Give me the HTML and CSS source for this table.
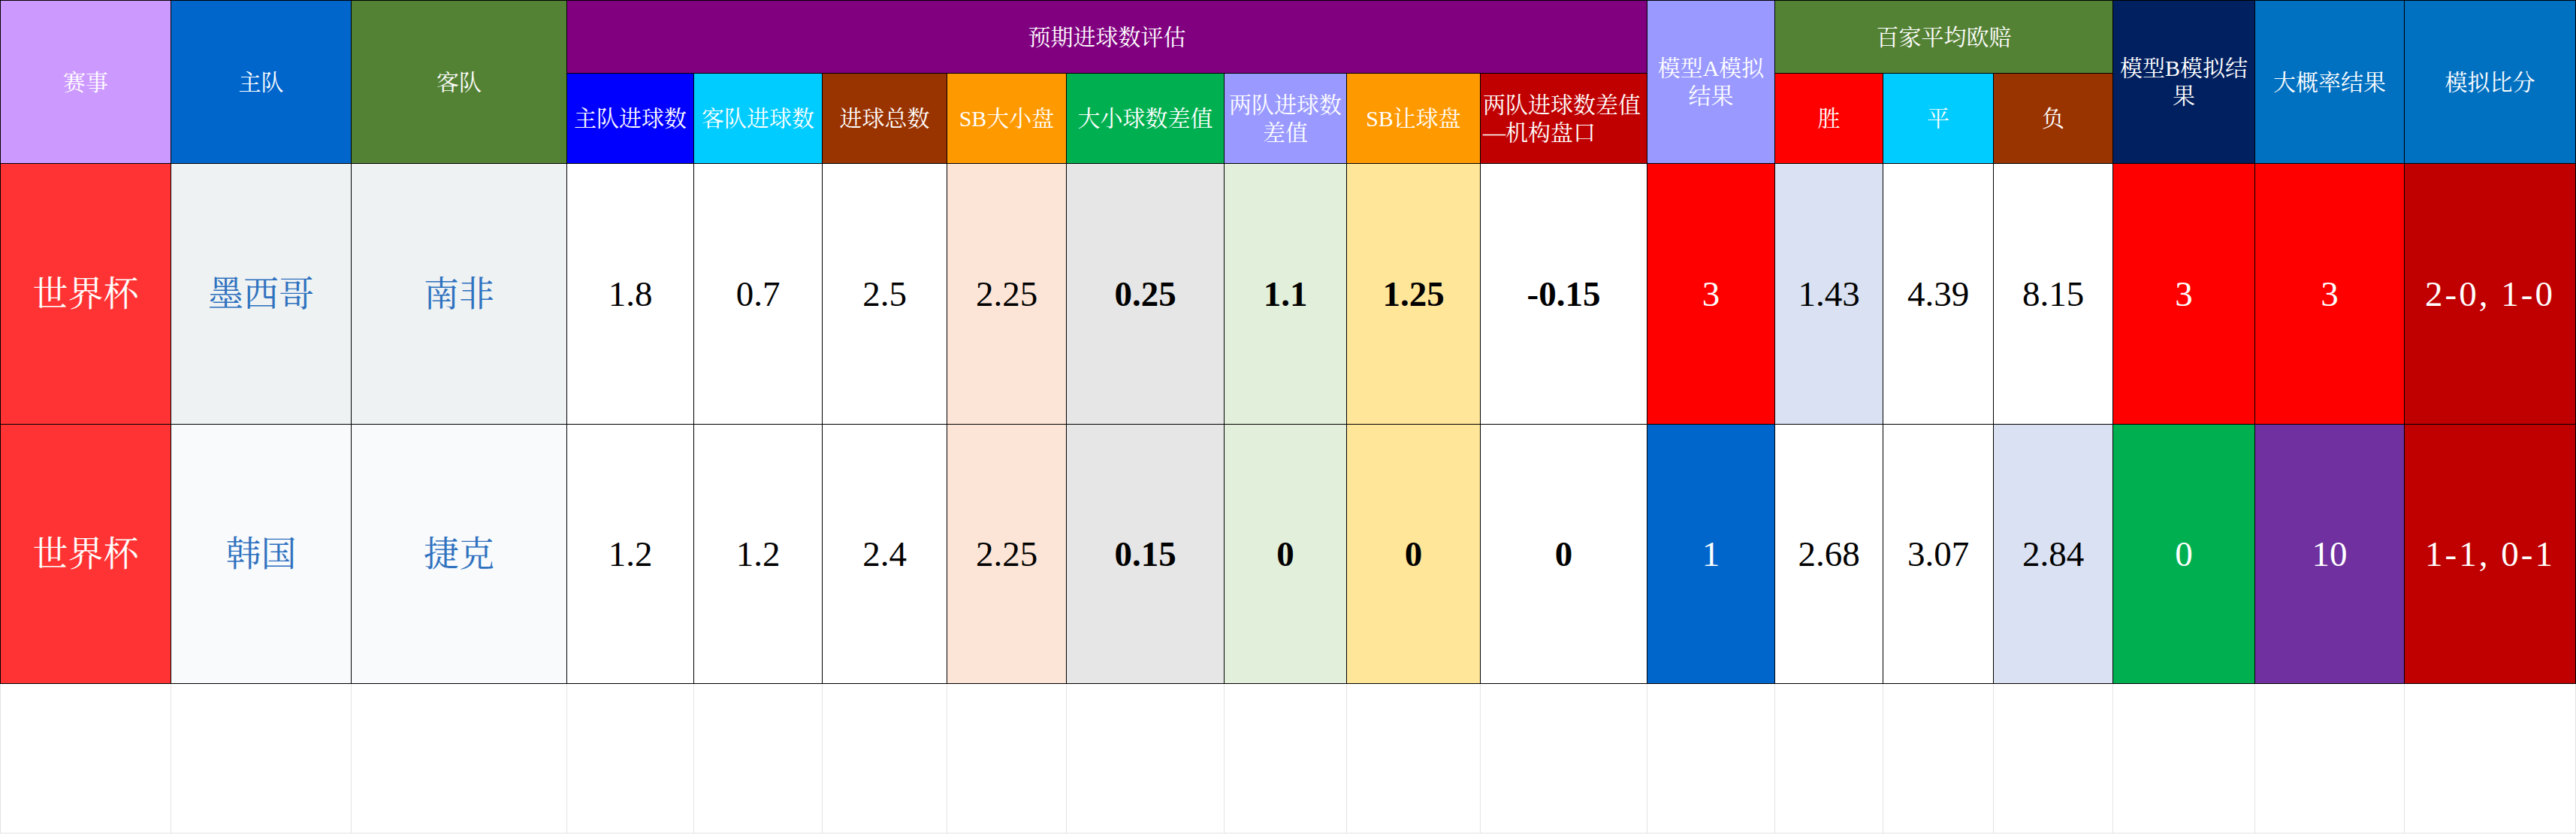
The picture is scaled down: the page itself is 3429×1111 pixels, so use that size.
FILE: index.html
```html
<!DOCTYPE html>
<html lang="zh-CN">
<head>
<meta charset="utf-8">
<title>预期进球数评估</title>
<link rel="stylesheet" href="styles.css">
</head>
<body>
<div class="sheet">
  <div class="cell hd tall c-lilac">赛事</div>
  <div class="cell hd tall c-blue2">主队</div>
  <div class="cell hd tall c-green">客队</div>
  <div class="cell hd wide8 c-purple">预期进球数评估</div>
  <div class="cell hd tall c-periwinkle">模型A模拟<br>结果</div>
  <div class="cell hd wide3 c-green">百家平均欧赔</div>
  <div class="cell hd tall c-navy">模型B模拟结<br>果</div>
  <div class="cell hd tall c-azure">大概率结果</div>
  <div class="cell hd tall c-azure">模拟比分</div>

  <div class="cell hd c-pureblue">主队进球数</div>
  <div class="cell hd c-cyan">客队进球数</div>
  <div class="cell hd c-brown">进球总数</div>
  <div class="cell hd c-orange">SB大小盘</div>
  <div class="cell hd c-emerald">大小球数差值</div>
  <div class="cell hd c-periwinkle">两队进球数<br>差值</div>
  <div class="cell hd c-orange">SB让球盘</div>
  <div class="cell hd c-darkred left">两队进球数差值<br>—机构盘口</div>
  <div class="cell hd c-red">胜</div>
  <div class="cell hd c-cyan">平</div>
  <div class="cell hd c-brown">负</div>

  <div class="cell dt d-cup">世界杯</div>
  <div class="cell dt d-team1 team">墨西哥</div>
  <div class="cell dt d-team1 team">南非</div>
  <div class="cell dt">1.8</div>
  <div class="cell dt">0.7</div>
  <div class="cell dt">2.5</div>
  <div class="cell dt d-peach">2.25</div>
  <div class="cell dt d-grey b">0.25</div>
  <div class="cell dt d-mint b">1.1</div>
  <div class="cell dt d-sand b">1.25</div>
  <div class="cell dt b">-0.15</div>
  <div class="cell dt w c-red">3</div>
  <div class="cell dt d-ice">1.43</div>
  <div class="cell dt">4.39</div>
  <div class="cell dt">8.15</div>
  <div class="cell dt w c-red">3</div>
  <div class="cell dt w c-red">3</div>
  <div class="cell dt w c-darkred score">2-0, 1-0</div>

  <div class="cell dt d-cup">世界杯</div>
  <div class="cell dt d-team2 team">韩国</div>
  <div class="cell dt d-team2 team">捷克</div>
  <div class="cell dt">1.2</div>
  <div class="cell dt">1.2</div>
  <div class="cell dt">2.4</div>
  <div class="cell dt d-peach">2.25</div>
  <div class="cell dt d-grey b">0.15</div>
  <div class="cell dt d-mint b">0</div>
  <div class="cell dt d-sand b">0</div>
  <div class="cell dt b">0</div>
  <div class="cell dt w c-blue2">1</div>
  <div class="cell dt">2.68</div>
  <div class="cell dt">3.07</div>
  <div class="cell dt d-ice">2.84</div>
  <div class="cell dt w c-emerald">0</div>
  <div class="cell dt w c-violet">10</div>
  <div class="cell dt w c-darkred score">1-1, 0-1</div>
</div>
<div class="filler">
  <div></div><div></div><div></div><div></div><div></div><div></div>
  <div></div><div></div><div></div><div></div><div></div><div></div>
  <div></div><div></div><div></div><div></div><div></div><div></div>
</div>
</body>
</html>
```

FILE: styles.css
```css
html, body {
  margin: 0;
  padding: 0;
  background: #ffffff;
}

body {
  width: 3429px;
  font-family: "Liberation Serif", "Noto Serif CJK SC", "Noto Sans CJK SC", serif;
}

.sheet,
.filler {
  display: grid;
  grid-template-columns: 226px 239px 286px 168px 170px 165px 158px 209px 162px 177px 221px 169px 143px 146px 158px 188px 198px 227px;
  gap: 1px;
}

.sheet {
  grid-template-rows: 96px 119px 346px 344px;
  background: #000000;
  border: 1px solid #000000;
}

.filler {
  grid-template-rows: 198px;
  background: #e3e3e3;
  border: 1px solid #e3e3e3;
  border-top: 0;
}

.filler > div {
  background: #ffffff;
}

.cell {
  display: flex;
  align-items: center;
  justify-content: center;
  text-align: center;
  background: #ffffff;
  color: #000000;
  overflow: hidden;
}

.hd {
  color: #ffffff;
  font-size: 30px;
  line-height: 37px;
}

.tall { grid-row: span 2; }
.wide8 { grid-column: span 8; }
.wide3 { grid-column: span 3; }

.left {
  justify-content: flex-start;
  text-align: left;
  padding-left: 3px;
}

.dt {
  font-size: 47px;
  line-height: 1;
}

.score {
  letter-spacing: 3px;
  white-space: nowrap;
}

.b { font-weight: bold; }
.w { color: #ffffff; }

.team { color: #2e71bf; }

/* header / accent fills */
.c-lilac { background: #cc99ff; }
.c-blue2 { background: #0066cc; }
.c-green { background: #548235; }
.c-purple { background: #800080; }
.c-periwinkle { background: #9999ff; }
.c-navy { background: #002060; }
.c-azure { background: #0070c0; }
.c-pureblue { background: #0000ff; }
.c-cyan { background: #00ccff; }
.c-brown { background: #993300; }
.c-orange { background: #ff9900; }
.c-emerald { background: #00b050; }
.c-darkred { background: #c00000; }
.c-red { background: #ff0000; }
.c-violet { background: #7030a0; }

/* data fills */
.d-cup { background: #ff3333; color: #ffffff; }
.d-team1 { background: #eef2f3; }
.d-team2 { background: #f8fafc; }
.d-peach { background: #fce4d6; }
.d-grey { background: #e7e6e6; }
.d-mint { background: #e2efda; }
.d-sand { background: #ffe699; }
.d-ice { background: #d9e1f2; }
```
